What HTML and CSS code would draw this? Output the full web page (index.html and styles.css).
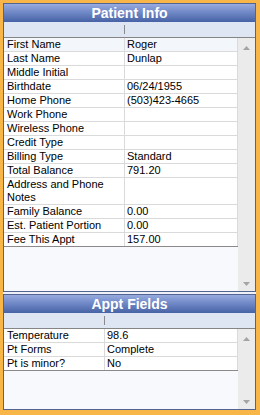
FILE: index.html
```html
<!DOCTYPE html>
<html lang="en">
  <head>
    <meta charset="UTF-8" />
    <title>Patient Info</title>
    <link rel="stylesheet" href="styles.css">
  </head>
  <body>
    <div class="frame">
      <div class="stack">
        <section class="panel panel-info">
          <div class="panel-title">Patient Info</div>
          <div class="col-head"><span class="col-sep"></span></div>
          <div class="panel-body">
            <div class="grid">
              <div class="row row-current"><div class="label">First Name</div><div class="value">Roger</div></div>
              <div class="row"><div class="label">Last Name</div><div class="value">Dunlap</div></div>
              <div class="row"><div class="label">Middle Initial</div><div class="value"></div></div>
              <div class="row"><div class="label">Birthdate</div><div class="value">06/24/1955</div></div>
              <div class="row"><div class="label">Home Phone</div><div class="value">(503)423-4665</div></div>
              <div class="row"><div class="label">Work Phone</div><div class="value"></div></div>
              <div class="row"><div class="label">Wireless Phone</div><div class="value"></div></div>
              <div class="row"><div class="label">Credit Type</div><div class="value"></div></div>
              <div class="row"><div class="label">Billing Type</div><div class="value">Standard</div></div>
              <div class="row"><div class="label">Total Balance</div><div class="value">791.20</div></div>
              <div class="row"><div class="label">Address and Phone Notes</div><div class="value"></div></div>
              <div class="row"><div class="label">Family Balance</div><div class="value">0.00</div></div>
              <div class="row"><div class="label">Est. Patient Portion</div><div class="value">0.00</div></div>
              <div class="row row-last"><div class="label">Fee This Appt</div><div class="value">157.00</div></div>
            </div>
            <div class="scrollbar">
              <svg class="arrow" width="9" height="6" viewBox="0 0 9 6"><path d="M1 5 L4.5 1 L8 5 Z" /></svg>
              <svg class="arrow" width="9" height="6" viewBox="0 0 9 6"><path d="M1 1 L4.5 5 L8 1 Z" /></svg>
            </div>
          </div>
        </section>

        <section class="panel panel-appt">
          <div class="panel-title">Appt Fields</div>
          <div class="col-head"><span class="col-sep"></span></div>
          <div class="panel-body">
            <div class="grid">
              <div class="row"><div class="label">Temperature</div><div class="value">98.6</div></div>
              <div class="row"><div class="label">Pt Forms</div><div class="value">Complete</div></div>
              <div class="row row-last"><div class="label">Pt is minor?</div><div class="value">No</div></div>
            </div>
            <div class="scrollbar">
              <svg class="arrow" width="9" height="6" viewBox="0 0 9 6"><path d="M1 5 L4.5 1 L8 5 Z" /></svg>
              <svg class="arrow" width="9" height="6" viewBox="0 0 9 6"><path d="M1 1 L4.5 5 L8 1 Z" /></svg>
            </div>
          </div>
        </section>
      </div>
    </div>
  </body>
</html>
```

FILE: styles.css
```css
:root {
  --frame: #f8b548;
  --panel-border: #52648f;
  --title-top: #97abdf;
  --title-bottom: #4763a5;
  --head-bg: #dde6f2;
  --head-line: #858585;
  --row-line: #dadada;
  --empty-bg: #f7f9fd;
  --scroll-bg: #ebebeb;
  --arrow: #a4a4a4;
  --text: #000;
}
* {
  box-sizing: border-box;
  margin: 0;
  padding: 0;
}
body {
  width: 260px;
  height: 415px;
  font-family: 'Liberation Sans', Arial, sans-serif;
  font-size: 11px;
  color: var(--text);
}
.frame {
  height: 415px;
  background: var(--frame);
  padding: 3px 4px 5px 3px;
}
.stack {
  height: 100%;
  display: flex;
  flex-direction: column;
  gap: 2px;
  background: #eef1f7;
}
.panel {
  display: flex;
  flex-direction: column;
  border: 1px solid var(--panel-border);
  background: var(--empty-bg);
}
.panel-info {
  height: 289px;
}
.panel-appt {
  flex: 1;
}
.panel-title {
  height: 18px;
  line-height: 18px;
  text-align: center;
  font-size: 14px;
  font-weight: bold;
  color: #fff;
  background: linear-gradient(var(--title-top), #7189c7 45%, var(--title-bottom));
}
.col-head {
  height: 16px;
  background: var(--head-bg);
  border-bottom: 1px solid var(--head-line);
  padding-top: 3px;
}
.col-sep {
  display: block;
  width: 1px;
  height: 9px;
  background: #8a8a8a;
}
.panel-info .col-sep {
  margin-left: 120px;
}
.panel-appt .col-sep {
  margin-left: 100px;
}
.panel-body {
  flex: 1;
  display: flex;
}
.grid {
  flex: 1;
}
.row {
  display: flex;
  background: #fff;
  border-bottom: 1px solid var(--row-line);
  line-height: 13px;
}
.row-current {
  background: #f3f7fc;
}
.row-last {
  border-bottom-color: #8a8a8a;
}
.label {
  padding-left: 3px;
  border-right: 1px solid var(--row-line);
}
.panel-info .label {
  width: 121px;
}
.panel-appt .label {
  width: 101px;
}
.value {
  flex: 1;
  padding-left: 2px;
  border-right: 1px solid var(--row-line);
}
.scrollbar {
  width: 17px;
  background: var(--scroll-bg);
  display: flex;
  flex-direction: column;
  justify-content: space-between;
  align-items: center;
  padding: 7px 0 4px;
}
.arrow path {
  fill: var(--arrow);
}
```
